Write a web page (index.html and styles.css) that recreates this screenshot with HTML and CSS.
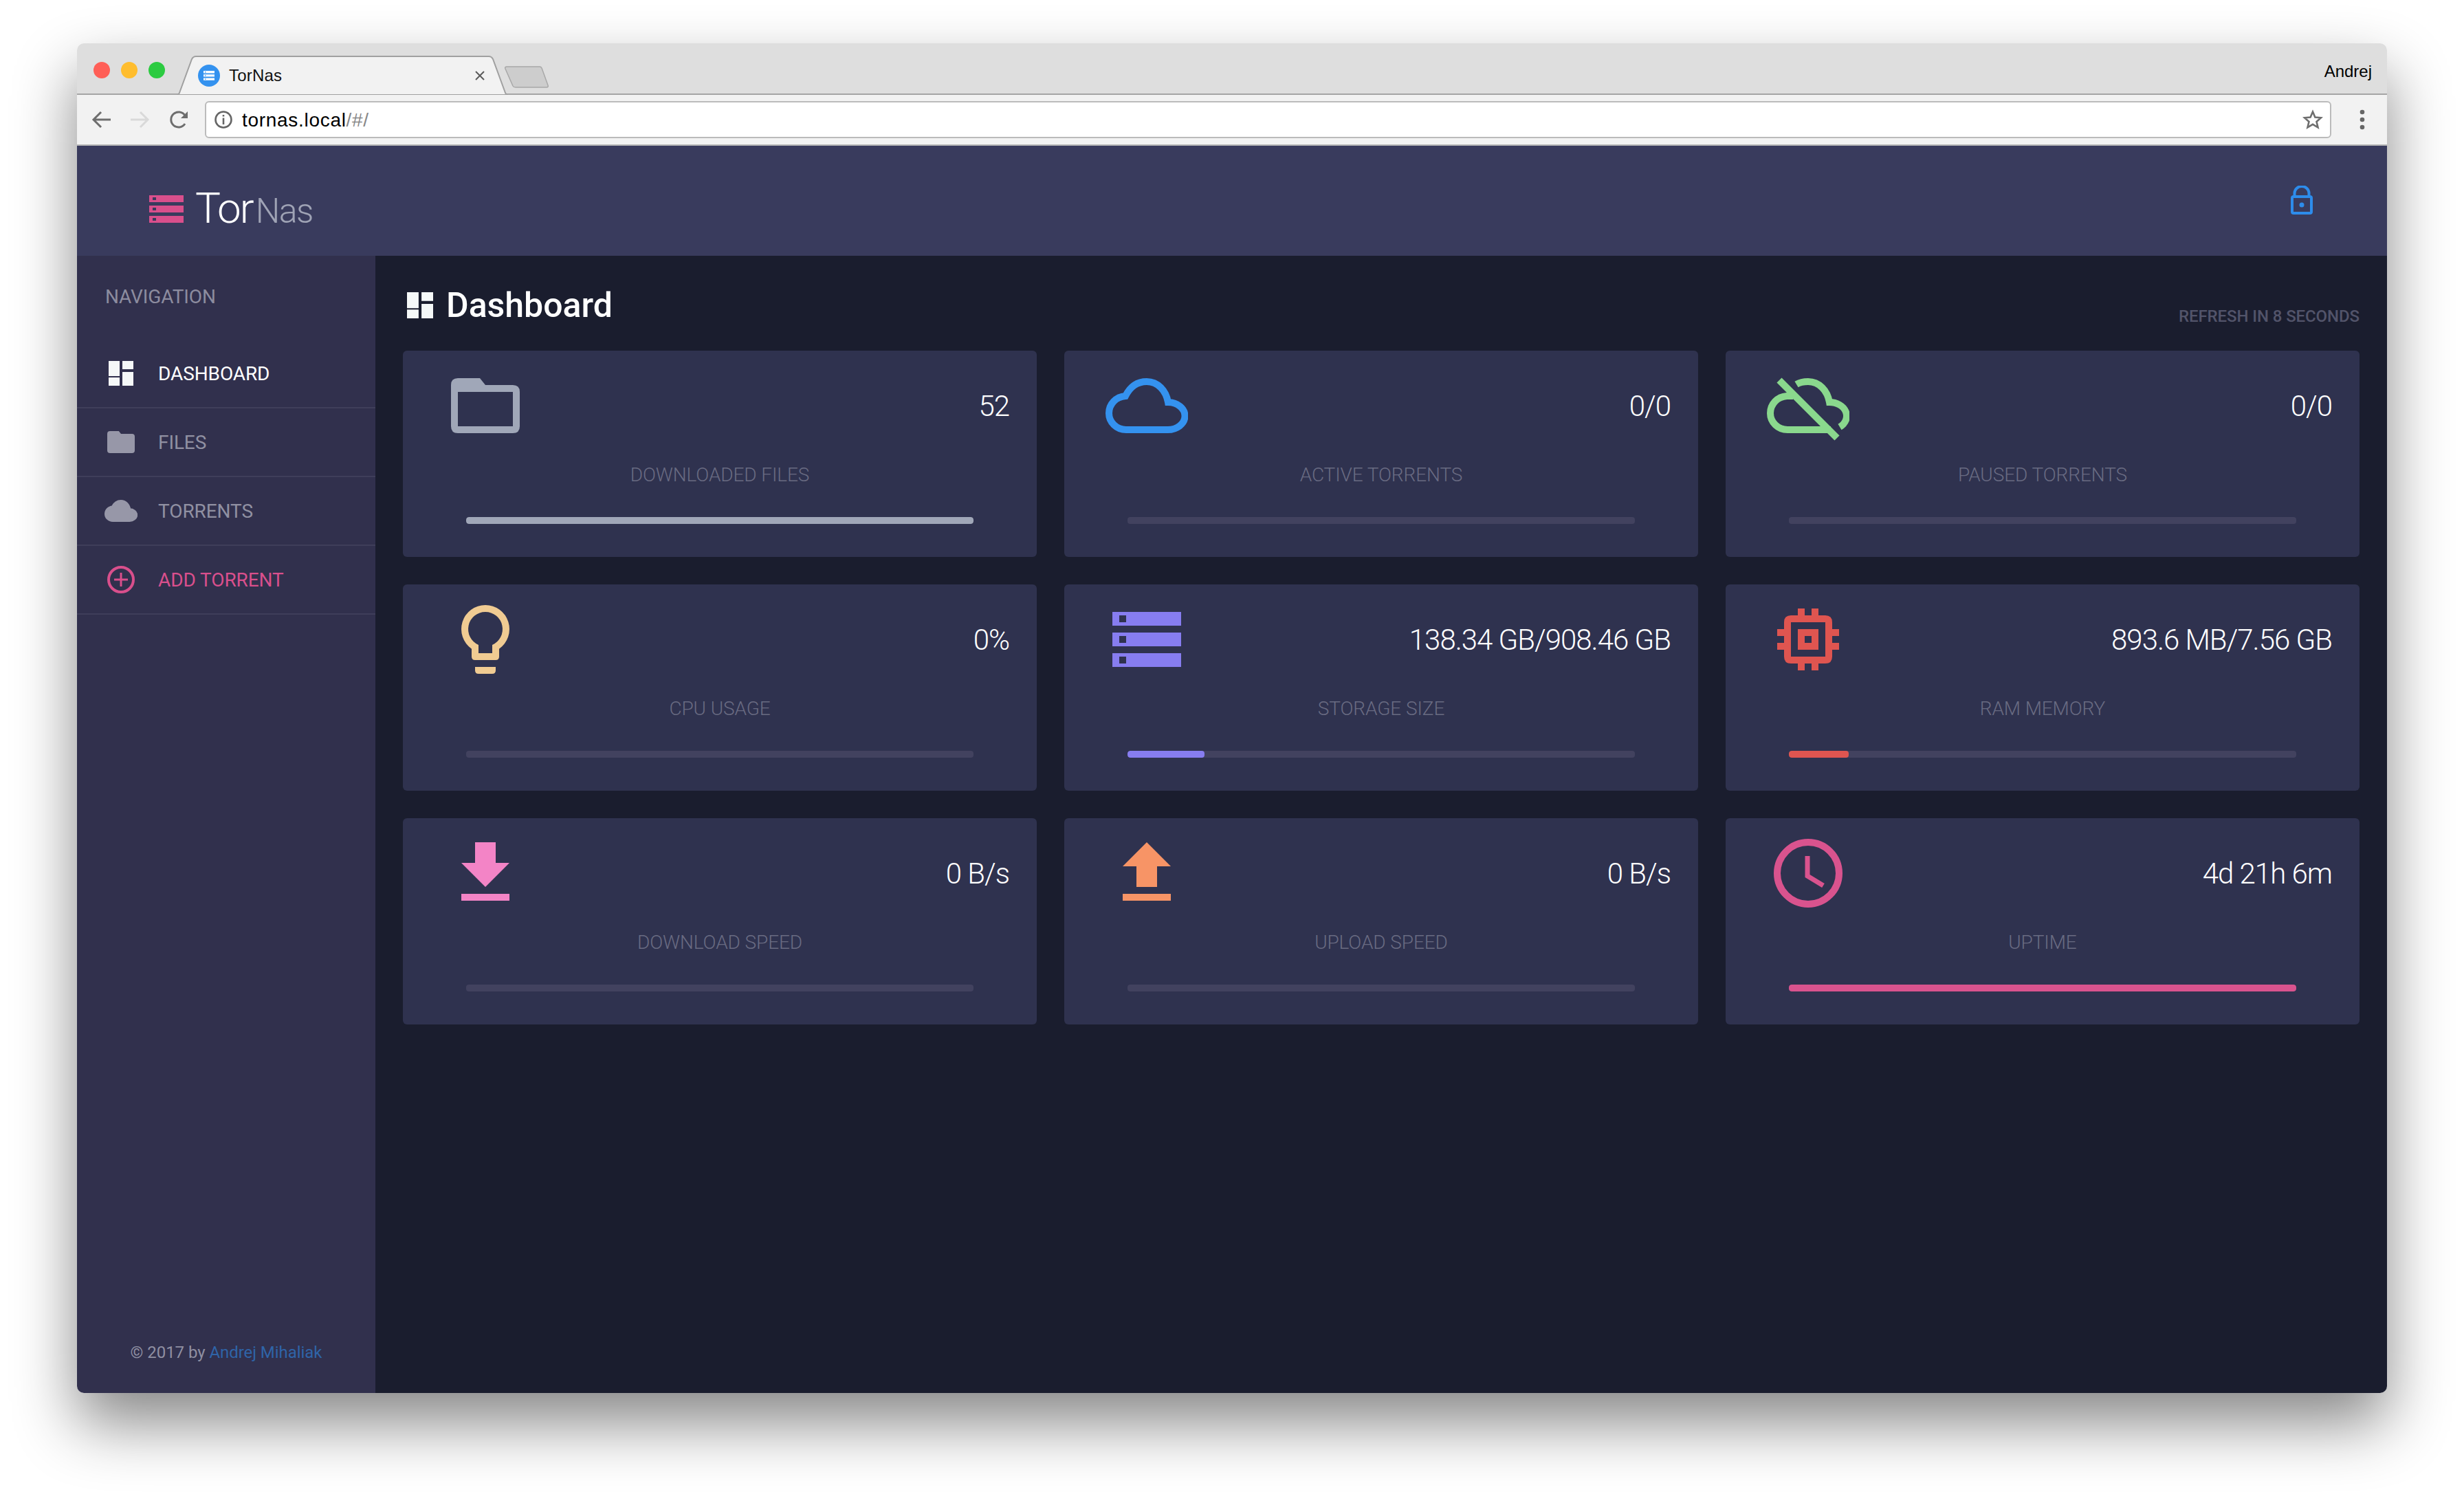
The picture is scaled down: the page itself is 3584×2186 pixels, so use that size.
FILE: index.html
```html
<!DOCTYPE html>
<html lang="en">
<head>
    <meta charset="UTF-8">
    <title>TorNas</title>
    <link rel="stylesheet" href="styles.css">
</head>
<body>
    <div class="window">
        <div class="tabstrip">
            <span class="light red"></span>
            <span class="light yellow"></span>
            <span class="light green"></span>
            <div class="tab">
                <svg class="tab-shape" viewBox="0 0 482 57"><path d="M0 57 Q3 57 4 54 L22 5 Q24 1 28 1 H454 Q458 1 460 5 L478 54 Q479 57 482 57 Z"/></svg>
                <span class="favicon">
                    <svg width="16" height="14" viewBox="0 0 16 14"><path d="M0 0h16v3.4H0zM0 5.2h16v3.4H0zM0 10.4h16v3.4H0z" fill="#fff"/><path d="M2 1h1.4v1.4H2zM2 6.2h1.4v1.4H2zM2 11.4h1.4v1.4H2z" fill="#3492ef"/></svg>
                </span>
                <span class="tab-title">TorNas</span>
                <svg class="tab-close" width="14" height="14" viewBox="0 0 14 14"><path d="M1 1l12 12M13 1L1 13" stroke="#5a5a5a" stroke-width="2"/></svg>
            </div>
            <svg class="newtab" width="65" height="32" viewBox="0 0 65 32"><path d="M3 1 H51 Q53 1 54 3 L63 28 Q64 31 61 31 H16 Q13 31 12 29 L1 4 Q0 1 3 1 Z" fill="#cdcdcd" stroke="#a8a8a8" stroke-width="1.5"/></svg>
            <span class="username">Andrej</span>
        </div>

        <div class="toolbar">
            <svg class="tool-icon" width="30" height="30" viewBox="0 0 30 30"><path d="M28 15H4M14 4L3 15l11 11" fill="none" stroke="#6e6e6e" stroke-width="3"/></svg>
            <svg class="tool-icon" width="30" height="30" viewBox="0 0 30 30"><path d="M2 15h24M16 4l11 11-11 11" fill="none" stroke="#d9d9d9" stroke-width="3"/></svg>
            <svg class="tool-icon reload" width="30" height="30" viewBox="0 0 30 30"><path d="M24 21a11 11 0 1 1 0-12" fill="none" stroke="#6e6e6e" stroke-width="3"/><path d="M28 3v10H18z" fill="#6e6e6e"/></svg>
            <div class="address">
                <svg width="26" height="26" viewBox="0 0 26 26"><circle cx="13" cy="13" r="11.5" fill="none" stroke="#666" stroke-width="2.6"/><path d="M11.7 6h2.6v2.6h-2.6zM11.7 10.5h2.6V20h-2.6z" fill="#666"/></svg>
                <span class="url">tornas.local<span class="url-path">/#/</span></span>
                <svg class="star" width="30" height="30" viewBox="0 0 30 30"><path d="M15 3.5l3.4 8 8.6.7-6.5 5.7 2 8.4-7.500-4.500-7.500 4.500 2-8.400L3 12.200l8.600-.7z" fill="none" stroke="#6e6e6e" stroke-width="2.600"/></svg>
            </div>
            <svg class="menu-dots" width="8" height="30" viewBox="0 0 8 30"><circle cx="4" cy="4" r="3.300"/><circle cx="4" cy="15" r="3.300"/><circle cx="4" cy="26" r="3.300"/></svg>
        </div>

        <header class="header">
            <div class="brand">
                <svg class="brand-icon" width="50" height="40" viewBox="0 0 50 40"><path fill-rule="evenodd" d="M0 0h50v10H0zM5 3v4h5V3zM0 15h50v10H0zM5 18v4h5v-4zM0 30h50v10H0zM5 33v4h5v-4z"/></svg>
                <span class="brand-tor">Tor</span>
                <span class="brand-nas">Nas</span>
            </div>
            <svg class="lock" width="32" height="42" viewBox="0 0 32 42"><path d="M5.500 15V11a10.500 10 0 0 1 21 0v4" fill="none" stroke="currentColor" stroke-width="4"/><rect x="2" y="16" width="28" height="24" rx="2" fill="none" stroke="currentColor" stroke-width="4"/><circle cx="16" cy="28" r="3.500" fill="currentColor"/></svg>
        </header>

        <div class="layout">
            <aside class="sidebar">
                <div class="nav-heading">NAVIGATION</div>
                <a class="nav-item active">
                    <span class="nav-icon"><svg width="36" height="36" viewBox="0 0 36 36"><path d="M0 0h16v22H0zM0 24h16v12H0zM20 0h16v12H20zM20 16h16v20H20z"/></svg></span>
                    DASHBOARD
                </a>
                <a class="nav-item">
                    <span class="nav-icon"><svg width="40" height="32" viewBox="0 0 100 80"><path d="M10 0H42L50 10H90Q100 10 100 20V70Q100 80 90 80H10Q0 80 0 70V10Q0 0 10 0Z"/></svg></span>
                    FILES
                </a>
                <a class="nav-item">
                    <span class="nav-icon"><svg width="48" height="32" viewBox="0 0 120 80"><path d="M30 75H90A25 20 0 0 0 91 35C88 18 76 5 60 5C45 5 35 14 29 26C15 27 5 38 5 51C5 64 16 75 30 75Z" stroke="currentColor" stroke-width="10"/></svg></span>
                    TORRENTS
                </a>
                <a class="nav-item add">
                    <span class="nav-icon"><svg width="40" height="40" viewBox="0 0 40 40"><circle cx="20" cy="20" r="18" fill="none" stroke="currentColor" stroke-width="4"/><path d="M20 10v20M10 20h20" stroke="currentColor" stroke-width="3"/></svg></span>
                    ADD TORRENT
                </a>
                <div class="sidebar-footer">© 2017 by <a class="footer-link">Andrej Mihaliak</a></div>
            </aside>

            <main class="content">
                <div class="page-head">
                    <h1 class="page-title">
                        <svg width="38" height="38" viewBox="0 0 36 36"><path d="M0 0h16v22H0zM0 24h16v12H0zM20 0h16v12H20zM20 16h16v20H20z"/></svg>
                        Dashboard
                    </h1>
                    <div class="refresh">REFRESH IN 8 SECONDS</div>
                </div>

                <div class="cards">
                    <div class="card c-files">
                        <div class="card-top">
                            <svg class="card-icon" viewBox="0 0 120 120"><path fill-rule="evenodd" d="M20 20H52L60 30H100Q110 30 110 40V90Q110 100 100 100H20Q10 100 10 90V30Q10 20 20 20ZM20 40V90H100V40Z"/></svg>
                            <span class="card-value">52</span>
                        </div>
                        <div class="card-label">DOWNLOADED FILES</div>
                        <div class="bar"><div class="bar-fill" style="width: 100%"></div></div>
                    </div>
                    <div class="card c-active">
                        <div class="card-top">
                            <svg class="card-icon" viewBox="0 0 120 120"><path transform="translate(0 20)" d="M30 75H90A25 20 0 0 0 91 35C88 18 76 5 60 5C45 5 35 14 29 26C15 27 5 38 5 51C5 64 16 75 30 75Z" fill="none" stroke="currentColor" stroke-width="10"/></svg>
                            <span class="card-value">0/0</span>
                        </div>
                        <div class="card-label">ACTIVE TORRENTS</div>
                        <div class="bar"><div class="bar-fill" style="width: 0%"></div></div>
                    </div>
                    <div class="card c-paused">
                        <div class="card-top">
                            <svg class="card-icon" viewBox="0 0 120 120"><g transform="translate(0 20)" fill="none" stroke="currentColor" stroke-width="10"><path d="M43 9C48 6 54 5 60 5C76 5 88 18 91 35A25 20 0 0 1 106 71"/><path d="M38 26H29C15 27 5 38 5 51C5 64 16 75 30 75H93"/><path d="M18 3L102 87"/></g></svg>
                            <span class="card-value">0/0</span>
                        </div>
                        <div class="card-label">PAUSED TORRENTS</div>
                        <div class="bar"><div class="bar-fill" style="width: 0%"></div></div>
                    </div>

                    <div class="card c-cpu">
                        <div class="card-top">
                            <svg class="card-icon" viewBox="0 0 120 120"><path fill-rule="evenodd" d="M60 10A35 35 0 0 1 80 73.700V85Q80 90 75 90H45Q40 90 40 85V73.700A35 35 0 0 1 60 10ZM60 20A25 25 0 0 0 50 67.900V80H70V67.900A25 25 0 0 0 60 20ZM45 100H75V105Q75 110 70 110H50Q45 110 45 105Z"/></svg>
                            <span class="card-value">0%</span>
                        </div>
                        <div class="card-label">CPU USAGE</div>
                        <div class="bar"><div class="bar-fill" style="width: 0%"></div></div>
                    </div>
                    <div class="card c-storage">
                        <div class="card-top">
                            <svg class="card-icon" viewBox="0 0 120 120"><path fill-rule="evenodd" d="M10 20H110V40H10ZM20 25V35H30V25ZM10 50H110V70H10ZM20 55V65H30V55ZM10 80H110V100H10ZM20 85V95H30V85Z"/></svg>
                            <span class="card-value">138.34 GB/908.46 GB</span>
                        </div>
                        <div class="card-label">STORAGE SIZE</div>
                        <div class="bar"><div class="bar-fill" style="width: 15.2%"></div></div>
                    </div>
                    <div class="card c-ram">
                        <div class="card-top">
                            <svg class="card-icon" viewBox="0 0 120 120"><path fill-rule="evenodd" d="M35 25H85Q95 25 95 35V85Q95 95 85 95H35Q25 95 25 85V35Q25 25 35 25ZM35 35V85H85V35ZM45 45H75V75H45ZM55 55V65H65V55ZM45 15H55V25H45ZM65 15H75V25H65ZM45 95H55V105H45ZM65 95H75V105H65ZM15 45H25V55H15ZM15 65H25V75H15ZM95 45H105V55H95ZM95 65H105V75H95Z"/></svg>
                            <span class="card-value">893.6 MB/7.56 GB</span>
                        </div>
                        <div class="card-label">RAM MEMORY</div>
                        <div class="bar"><div class="bar-fill" style="width: 11.7%"></div></div>
                    </div>

                    <div class="card c-down">
                        <div class="card-top">
                            <svg class="card-icon" viewBox="0 0 120 120"><path d="M45 15H75V45H95L60 80L25 45H45ZM25 90H95V100H25Z"/></svg>
                            <span class="card-value">0 B/s</span>
                        </div>
                        <div class="card-label">DOWNLOAD SPEED</div>
                        <div class="bar"><div class="bar-fill" style="width: 0%"></div></div>
                    </div>
                    <div class="card c-up">
                        <div class="card-top">
                            <svg class="card-icon" viewBox="0 0 120 120"><path d="M60 15L95 50H75V80H45V50H25ZM25 90H95V100H25Z"/></svg>
                            <span class="card-value">0 B/s</span>
                        </div>
                        <div class="card-label">UPLOAD SPEED</div>
                        <div class="bar"><div class="bar-fill" style="width: 0%"></div></div>
                    </div>
                    <div class="card c-uptime">
                        <div class="card-top">
                            <svg class="card-icon" viewBox="0 0 120 120"><circle cx="60" cy="60" r="45" fill="none" stroke="currentColor" stroke-width="10"/><path d="M59 35V64L82 78" fill="none" stroke="currentColor" stroke-width="7"/></svg>
                            <span class="card-value">4d 21h 6m</span>
                        </div>
                        <div class="card-label">UPTIME</div>
                        <div class="bar"><div class="bar-fill" style="width: 100%"></div></div>
                    </div>
                </div>
            </main>
        </div>
    </div>
</body>
</html>
```

FILE: styles.css
```css
html, body {
    height: 100%;
}
body {
    margin: 0;
    padding: 63px 112px 160px;
    box-sizing: border-box;
    background-color: #fff;
    font-family: Roboto, "Liberation Sans", sans-serif;
    overflow: hidden;
}
.window {
    display: flex;
    flex-direction: column;
    height: 100%;
    border-radius: 10px;
    box-shadow: 0 44px 90px rgba(0, 0, 0, 0.47);
    overflow: hidden;
}

/* browser chrome */
.tabstrip {
    display: flex;
    align-items: flex-end;
    flex: none;
    height: 75px;
    box-sizing: border-box;
    padding-left: 24px;
    background-color: #dedede;
    border-bottom: 2px solid #a5a5a5;
}
.light {
    align-self: flex-start;
    width: 24px;
    height: 24px;
    margin: 27px 16px 0 0;
    border-radius: 50%;
}
.red { background-color: #ff5f57; }
.yellow { background-color: #ffbd2e; }
.green { background-color: #2ccb41; }
.tab {
    position: relative;
    display: flex;
    align-items: center;
    width: 482px;
    height: 57px;
    margin: 0 0 -2px 1px;
    padding: 0 34px 0 31px;
    box-sizing: border-box;
}
.tab-shape {
    position: absolute;
    left: 0;
    top: 0;
    width: 100%;
    height: 100%;
    fill: #f2f2f2;
    stroke: #a0a0a0;
    stroke-width: 2;
}
.favicon {
    position: relative;
    display: flex;
    align-items: center;
    justify-content: center;
    width: 32px;
    height: 32px;
    border-radius: 50%;
    background-color: #3492ef;
}
.tab-title {
    position: relative;
    margin-left: 13px;
    font-family: "Liberation Sans", sans-serif;
    font-size: 24px;
    letter-spacing: 0.2px;
    color: #111;
}
.tab-close {
    position: relative;
    margin-left: auto;
}
.newtab {
    margin: 0 0 8px -5px;
}
.username {
    margin: 0 22px 18px auto;
    font-family: "Liberation Sans", sans-serif;
    font-size: 24px;
    color: #000;
}
.toolbar {
    display: flex;
    align-items: center;
    flex: none;
    gap: 25px;
    height: 74px;
    box-sizing: border-box;
    padding: 0 32px 0 21px;
    background-color: #f2f2f2;
    border-bottom: 2px solid #b5b5b5;
}
.tool-icon {
    flex: none;
}
.reload {
    margin-left: 2px;
}
.address {
    display: flex;
    align-items: center;
    flex: 1;
    height: 54px;
    margin: 0 16px 0 -2px;
    padding: 0 10px 0 12px;
    box-sizing: border-box;
    background-color: #fff;
    border: 2px solid #bbb;
    border-radius: 6px;
}
.url {
    margin: 2px 0 0 14px;
    font-family: "Liberation Sans", sans-serif;
    font-size: 28px;
    letter-spacing: 0.7px;
    color: #000;
}
.url-path {
    color: #888;
}
.star {
    margin-left: auto;
}
.menu-dots {
    fill: #666;
}

/* app header */
.header {
    display: flex;
    justify-content: space-between;
    align-items: flex-start;
    flex: none;
    height: 160px;
    box-sizing: border-box;
    padding: 58px 108px 0 105px;
    background-color: #393b5d;
}
.brand {
    display: flex;
    align-items: baseline;
    margin-top: 2px;
    font-weight: 300;
}
.brand-icon {
    fill: #d94f8c;
    margin-right: 17px;
}
.brand-tor {
    font-size: 62px;
    line-height: 62px;
    letter-spacing: -2px;
    color: #fff;
}
.brand-nas {
    margin-left: 4px;
    font-size: 50px;
    letter-spacing: -1.5px;
    color: #9fa3b5;
}
.lock {
    color: #2d8ceb;
}

/* body of the app */
.layout {
    display: flex;
    flex: 1;
    min-height: 0;
}
.sidebar {
    display: flex;
    flex-direction: column;
    flex: none;
    width: 434px;
    background-color: #31304d;
}
.nav-heading {
    padding: 45px 0 47px 41px;
    font-size: 28px;
    line-height: 30px;
    letter-spacing: -0.1px;
    color: #8c8c9f;
}
.nav-item {
    display: flex;
    align-items: center;
    height: 100px;
    box-sizing: border-box;
    padding-left: 40px;
    border-bottom: 2px solid #3f3e5a;
    font-size: 28px;
    letter-spacing: -0.1px;
    color: #9090a2;
}
.nav-icon {
    display: flex;
    align-items: center;
    justify-content: center;
    width: 48px;
    margin-right: 30px;
    fill: #9797a8;
    color: #9797a8;
}
.nav-item.active {
    color: #fff;
}
.nav-item.active .nav-icon {
    fill: #f5f8f8;
}
.nav-item.add {
    color: #d94f8c;
}
.nav-item.add .nav-icon {
    color: #d94f8c;
}
.sidebar-footer {
    margin-top: auto;
    padding-bottom: 45px;
    text-align: center;
    font-size: 24px;
    letter-spacing: -0.05px;
    color: #8f8fa2;
}
.footer-link {
    color: #2f64a8;
}
.content {
    flex: 1;
    min-width: 0;
    padding: 0 40px;
    background-color: #1a1d2e;
}
.page-head {
    display: flex;
    justify-content: space-between;
    align-items: flex-end;
    height: 138px;
    box-sizing: border-box;
    padding-bottom: 36px;
}
.page-title {
    display: flex;
    align-items: center;
    gap: 19px;
    margin: 0 0 2px 6px;
    font-size: 50px;
    line-height: 56px;
    font-weight: 500;
    color: #fff;
    fill: #f5f8f8;
}
.refresh {
    font-size: 24px;
    letter-spacing: -0.1px;
    font-weight: 500;
    color: #52546a;
}
.cards {
    display: grid;
    grid-template-columns: repeat(3, 1fr);
    gap: 40px;
}
.card {
    height: 300px;
    box-sizing: border-box;
    padding-top: 20px;
    border-radius: 6px;
    background-color: #2f324f;
}
.card-top {
    display: flex;
    justify-content: space-between;
    align-items: center;
    height: 120px;
    padding: 0 40px 0 60px;
}
.card-icon {
    width: 120px;
    height: 120px;
    fill: currentColor;
}
.card-value {
    font-size: 42px;
    font-weight: 300;
    letter-spacing: -1px;
    color: #fff;
}
.card-label {
    margin-top: 26px;
    line-height: 30px;
    text-align: center;
    font-size: 28px;
    font-weight: 300;
    letter-spacing: -0.1px;
    color: #696b82;
}
.bar {
    width: 80%;
    height: 10px;
    margin: 46px auto 0;
    border-radius: 4px;
    background-color: #42425f;
    overflow: hidden;
}
.bar-fill {
    height: 100%;
    border-radius: 4px;
    background-color: currentColor;
}
.c-files { color: #a0a7b8; }
.c-active { color: #3492ef; }
.c-paused { color: #8ad88d; }
.c-cpu { color: #f0cb92; }
.c-storage { color: #877df0; }
.c-ram { color: #df5550; }
.c-down { color: #f384c6; }
.c-up { color: #f79466; }
.c-uptime { color: #d9538e; }
```
